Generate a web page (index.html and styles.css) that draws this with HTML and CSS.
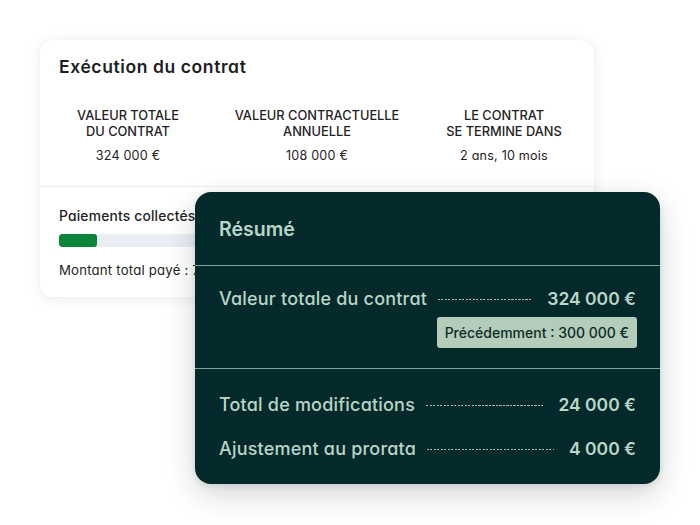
FILE: index.html
```html
<!DOCTYPE html>
<html lang="fr">
<head>
<meta charset="utf-8">
<link rel="stylesheet" href="styles.css">
</head>
<body>
<div class="scene">
  <section class="card">
    <h1 class="card-title">Exécution du contrat</h1>
    <div class="stats">
      <div class="stat">
        <div class="stat-label">VALEUR TOTALE<br>DU CONTRAT</div>
        <div class="stat-value">324 000 €</div>
      </div>
      <div class="stat">
        <div class="stat-label">VALEUR CONTRACTUELLE<br>ANNUELLE</div>
        <div class="stat-value">108 000 €</div>
      </div>
      <div class="stat">
        <div class="stat-label">LE CONTRAT<br>SE TERMINE DANS</div>
        <div class="stat-value">2 ans, 10 mois</div>
      </div>
    </div>
    <div class="payments">
      <div class="payments-title">Paiements collectés</div>
      <div class="progress"><div class="progress-fill" style="width:38px"></div></div>
      <div class="payments-total">Montant total payé : 72 000 €</div>
    </div>
  </section>

  <section class="summary">
    <h2 class="summary-title">Résumé</h2>
    <div class="summary-section">
      <div class="row">
        <span class="row-label">Valeur totale du contrat</span>
        <span class="dots"></span>
        <span class="row-value">324 000 €</span>
      </div>
      <div class="badge-line"><span class="badge">Précédemment : 300 000 €</span></div>
    </div>
    <div class="summary-section last">
      <div class="row">
        <span class="row-label">Total de modifications</span>
        <span class="dots"></span>
        <span class="row-value">24 000 €</span>
      </div>
      <div class="row">
        <span class="row-label">Ajustement au prorata</span>
        <span class="dots"></span>
        <span class="row-value">4 000 €</span>
      </div>
    </div>
  </section>
</div>
</body>
</html>
```

FILE: styles.css
```css
* { box-sizing: border-box; }
html, body { margin: 0; padding: 0; background: #ffffff; }
body {
  font-family: "Inter", "Noto Sans", sans-serif;
  font-feature-settings: "cv11" 1;
  color: #1d1f21;
  width: 700px;
  height: 525px;
  overflow: hidden;
}
.scene {
  position: relative;
  padding: 40px 0 0 40px;
}
.card {
  width: 554px;
  height: 257px;
  background: #fff;
  border-radius: 13px;
  box-shadow: 0 2px 14px rgba(20, 30, 40, 0.08), 0 0 2px rgba(20,30,40,0.05);
  overflow: hidden;
}
.card-title {
  margin: 0;
  padding: 15px 19px 0;
  font-size: 17.5px;
  line-height: 24px;
  font-weight: 600;
  letter-spacing: 0.6px;
  color: #1c1e20;
}
.stats {
  display: grid;
  grid-template-columns: 176px 202px 172px;
  margin-top: 29px;
  padding-bottom: 22px;
  border-bottom: 1px solid #eceef0;
  text-align: center;
}
.stat-label {
  font-size: 12.8px;
  line-height: 16px;
  font-weight: 500;
  color: #1f2224;
}
.stat-value {
  margin-top: 8px;
  font-size: 12.6px;
  line-height: 16px;
  letter-spacing: 0.2px;
  color: #1f2224;
}
.payments {
  padding: 19px 19px 0;
}
.payments-title {
  font-size: 13.8px;
  line-height: 20px;
  font-weight: 500;
  letter-spacing: 0.2px;
}
.progress {
  margin-top: 8px;
  height: 13px;
  background: #e9eef4;
  border-radius: 3px;
  overflow: hidden;
}
.progress-fill {
  height: 100%;
  background: #0b843b;
  border-radius: 3px;
}
.payments-total {
  margin-top: 13px;
  font-size: 13.2px;
  line-height: 20px;
  letter-spacing: 0.2px;
}

.summary {
  position: absolute;
  left: 195px;
  top: 192px;
  width: 465px;
  height: 292px;
  background: #04292a;
  border-radius: 16px;
  box-shadow: 0 10px 30px rgba(10, 30, 30, 0.18), 0 2px 6px rgba(10,30,30,0.10);
  color: #b9d5c7;
}
.summary-title {
  margin: 0;
  padding: 25px 24px 24px;
  font-size: 19.5px;
  line-height: 24px;
  font-weight: 600;
  border-bottom: 1px solid #7fa69b;
}
.summary-section {
  padding: 21px 24px 20px;
  border-bottom: 1px solid #7fa69b;
}
.summary-section.last {
  border-bottom: none;
  padding-top: 24px;
  display: flex;
  flex-direction: column;
  gap: 20px;
}
.row {
  display: flex;
  align-items: center;
  font-size: 18px;
  line-height: 24px;
}
.row-label { font-weight: 500; letter-spacing: 0.2px; }
.dots {
  flex: 1;
  height: 1px;
  margin: 1px 15px 0 11px;
  background: repeating-linear-gradient(to right, #9dbdb1 0 2px, transparent 2px 3.5px);
}
.row-value {
  font-size: 17.5px;
  font-weight: 600;
}
.badge-line {
  display: flex;
  justify-content: flex-end;
  margin-top: 6px;
}
.badge {
  display: inline-block;
  background: #b4cdba;
  color: #0f2b28;
  font-size: 14px;
  line-height: 31px;
  height: 31px;
  padding: 0 8px;
  border-radius: 3px;
  font-weight: 500;
  margin-right: -1px;
}
```
